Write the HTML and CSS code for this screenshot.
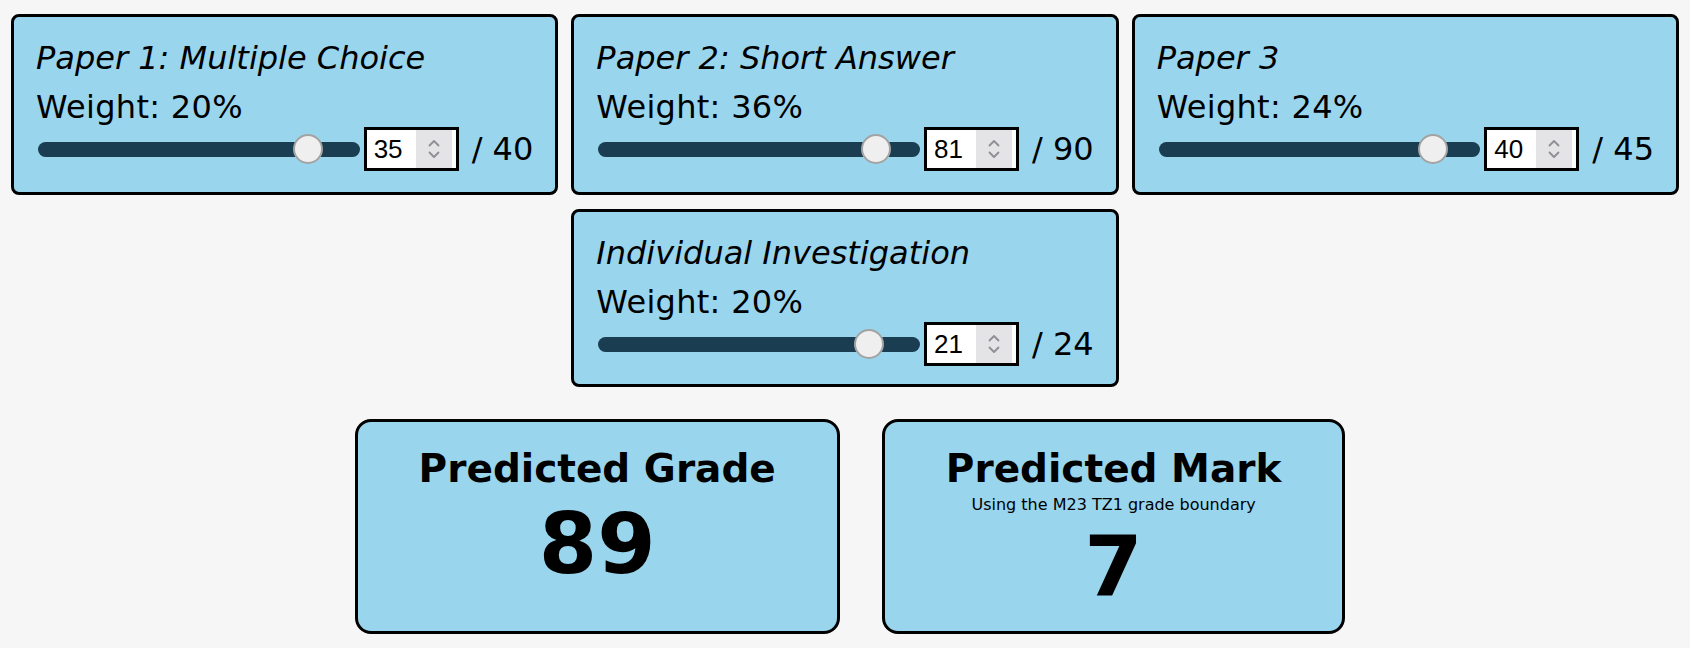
FILE: index.html
```html
<!DOCTYPE html>
<html lang="en">
<head>
<meta charset="utf-8">
<title>Grade Predictor</title>
<link rel="stylesheet" href="styles.css">
</head>
<body>
<main class="page">
  <section class="papers">
    <div class="card">
      <div class="card-title">Paper 1: Multiple Choice</div>
      <div class="weight">Weight: 20%</div>
      <div class="row">
        <input class="slider" type="range" min="0" max="40" value="35">
        <div class="num">
          <input class="num-input" type="number" min="0" max="40" value="35">
          <span class="spin"><svg width="14" height="26" viewBox="0 0 14 26"><path d="M2.5 9.5 L7 5 L11.5 9.5 M2.5 16.5 L7 21 L11.5 16.5" fill="none" stroke="#8e8e93" stroke-width="1.8" stroke-linecap="round" stroke-linejoin="round"/></svg></span>
        </div>
        <span class="max">/ 40</span>
      </div>
    </div>
    <div class="card">
      <div class="card-title">Paper 2: Short Answer</div>
      <div class="weight">Weight: 36%</div>
      <div class="row">
        <input class="slider" type="range" min="0" max="90" value="81">
        <div class="num">
          <input class="num-input" type="number" min="0" max="90" value="81">
          <span class="spin"><svg width="14" height="26" viewBox="0 0 14 26"><path d="M2.5 9.5 L7 5 L11.5 9.5 M2.5 16.5 L7 21 L11.5 16.5" fill="none" stroke="#8e8e93" stroke-width="1.8" stroke-linecap="round" stroke-linejoin="round"/></svg></span>
        </div>
        <span class="max">/ 90</span>
      </div>
    </div>
    <div class="card">
      <div class="card-title">Paper 3</div>
      <div class="weight">Weight: 24%</div>
      <div class="row">
        <input class="slider" type="range" min="0" max="45" value="40">
        <div class="num">
          <input class="num-input" type="number" min="0" max="45" value="40">
          <span class="spin"><svg width="14" height="26" viewBox="0 0 14 26"><path d="M2.5 9.5 L7 5 L11.5 9.5 M2.5 16.5 L7 21 L11.5 16.5" fill="none" stroke="#8e8e93" stroke-width="1.8" stroke-linecap="round" stroke-linejoin="round"/></svg></span>
        </div>
        <span class="max">/ 45</span>
      </div>
    </div>
    <div class="card card-center">
      <div class="card-title">Individual Investigation</div>
      <div class="weight">Weight: 20%</div>
      <div class="row">
        <input class="slider" type="range" min="0" max="24" value="21">
        <div class="num">
          <input class="num-input" type="number" min="0" max="24" value="21">
          <span class="spin"><svg width="14" height="26" viewBox="0 0 14 26"><path d="M2.5 9.5 L7 5 L11.5 9.5 M2.5 16.5 L7 21 L11.5 16.5" fill="none" stroke="#8e8e93" stroke-width="1.8" stroke-linecap="round" stroke-linejoin="round"/></svg></span>
        </div>
        <span class="max">/ 24</span>
      </div>
    </div>
  </section>
  <section class="results">
    <div class="result">
      <h2 class="result-title">Predicted Grade</h2>
      <div class="result-value">89</div>
    </div>
    <div class="result">
      <h2 class="result-title">Predicted Mark</h2>
      <div class="result-note">Using the M23 TZ1 grade boundary</div>
      <div class="result-value">7</div>
    </div>
  </section>
</main>
</body>
</html>
```
FILE: styles.css
```css
* { box-sizing: border-box; }

html, body {
  margin: 0;
  padding: 0;
  background: #f6f6f6;
}

body {
  font-family: "DejaVu Sans", Verdana, sans-serif;
  color: #000;
}

.page {
  padding: 14px 11px 0;
}

.papers {
  display: grid;
  grid-template-columns: repeat(3, 1fr);
  column-gap: 13px;
  row-gap: 14px;
}

.card {
  background: #9ad5ee;
  border: 3px solid #000;
  border-radius: 8px;
  padding: 23px 22px 21px;
  font-size: 32px;
}

.card-center {
  grid-column: 2;
  padding-bottom: 18px;
}

.card-title {
  font-style: italic;
  line-height: 37px;
  margin-bottom: 12px;
}

.weight {
  line-height: 37px;
  margin-bottom: 1px;
  letter-spacing: 0.3px;
}

.row {
  display: flex;
  align-items: center;
  height: 44px;
}

.slider {
  -webkit-appearance: none;
  appearance: none;
  flex: 1;
  min-width: 0;
  height: 30px;
  margin: 0 2px;
  background: transparent;
}

.slider::-webkit-slider-runnable-track {
  height: 15px;
  border-radius: 8px;
  background: #1b3d52;
}

.slider::-webkit-slider-thumb {
  -webkit-appearance: none;
  appearance: none;
  width: 30px;
  height: 30px;
  margin-top: -7.5px;
  border-radius: 50%;
  background: #efefef;
  border: 2px solid #a3a3a3;
}

.num {
  display: flex;
  width: 95px;
  height: 44px;
  margin-left: 2px;
  border: 3px solid #000;
  background: #fff;
  padding-right: 4px;
}

.num-input {
  width: 49px;
  height: 100%;
  border: none;
  outline: none;
  padding: 0 0 0 7px;
  margin: 0;
  font-family: "Liberation Sans", Arial, sans-serif;
  font-size: 26px;
  color: #000;
  background: #fff;
  -moz-appearance: textfield;
}

.num-input::-webkit-inner-spin-button,
.num-input::-webkit-outer-spin-button {
  -webkit-appearance: none;
  margin: 0;
}

.spin {
  width: 36px;
  height: 100%;
  background: #e4e4e7;
  display: flex;
  align-items: center;
  justify-content: center;
}

.max {
  margin-left: 13px;
  white-space: nowrap;
}

.results {
  display: flex;
  justify-content: center;
  gap: 42px;
  margin-top: 32px;
  padding-left: 10px;
}

.result {
  background: #9ad5ee;
  border: 3px solid #000;
  border-radius: 16px;
  padding: 25px 61px 15px;
  text-align: center;
}

.result-title {
  margin: 0 0 4px;
  font-size: 39px;
  font-weight: bold;
  line-height: 44px;
  white-space: nowrap;
}

.result-note {
  font-size: 16px;
  line-height: 19px;
}

.result-value {
  margin-top: 4px;
  font-size: 84px;
  font-weight: bold;
  line-height: 98px;
}
```
